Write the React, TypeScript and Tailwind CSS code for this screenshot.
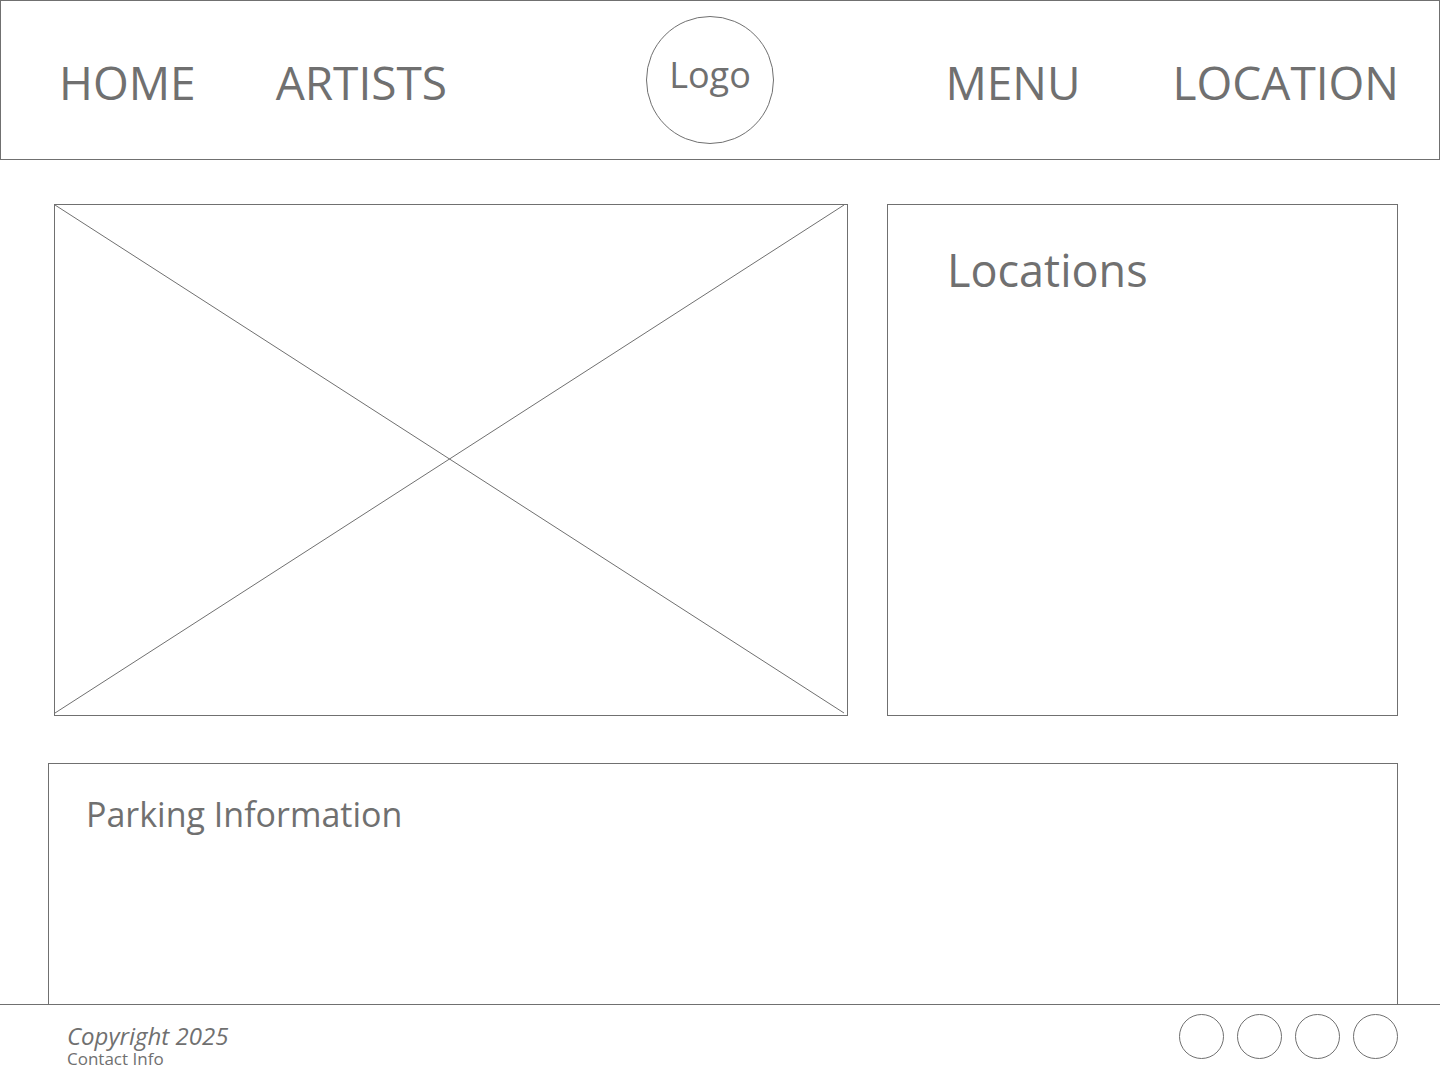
const social = ["Facebook", "Instagram", "Twitter", "YouTube"];

export default function App() {
  return (
    <div className="flex min-h-screen flex-col bg-white font-['Open_Sans',sans-serif] text-[#707070]">
      <header className="grid h-40 shrink-0 grid-cols-[1fr_auto_1fr] items-center border border-[#707070] pr-10 pl-5">
        <nav aria-label="Primary" className="flex gap-20 pt-1 pl-[38px] text-[46px] leading-[60px]">
          <a href="#home">HOME</a>
          <a href="#artists">ARTISTS</a>
        </nav>
        <a href="#top" className="flex size-32 items-start justify-center rounded-full border border-[#707070] pt-[34px] text-4xl leading-12">
          Logo
        </a>
        <nav aria-label="Secondary" className="flex justify-end gap-[92px] pt-1 text-[46px] leading-[60px]">
          <a href="#menu">MENU</a>
          <a href="#location">LOCATION</a>
        </nav>
      </header>
      <main className="flex flex-1 flex-col gap-[47px] pt-11 pr-[42px] pl-12">
        <div className="grid min-h-[512px] grid-cols-[794fr_511fr] gap-[39px] pl-1.5">
          <div className="min-w-0 border border-[#707070]">
            <svg className="size-full" viewBox="0 0 792 510" preserveAspectRatio="none" role="img" aria-label="Image placeholder">
              <path d="M0 0L789 508M0 508L789 0" stroke="#707070" fill="none" />
            </svg>
          </div>
          <section className="min-w-0 border border-[#707070] pt-[35px] pl-[59px]">
            <h2 className="text-[45px] leading-[60px]">Locations</h2>
          </section>
        </div>
        <section className="flex-1 border border-b-0 border-[#707070] px-[37px] pt-[26px]">
          <h2 className="text-[34px] leading-12">Parking Information</h2>
        </section>
      </main>
      <footer className="flex h-[76px] shrink-0 justify-between border-t border-[#707070] pt-[9px] pr-[42px] pl-[67px]">
        <div className="pt-2">
          <p className="text-2xl leading-7 italic">Copyright 2025</p>
          <p className="text-[17px] leading-[18px]">Contact Info</p>
        </div>
        <ul className="flex gap-[13px]">
          {social.map((name) => (
            <li key={name}>
              <a href="#social" aria-label={name} className="block size-[45px] rounded-full border border-[#707070]" />
            </li>
          ))}
        </ul>
      </footer>
    </div>
  );
}
